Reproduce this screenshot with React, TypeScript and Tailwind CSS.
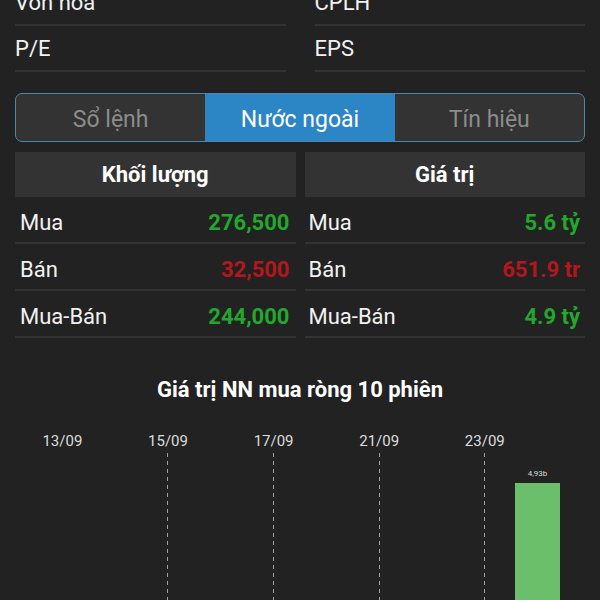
const rows = [
  { label: "Mua", vol: "276,500", val: "5.6 tỷ", up: true, valUp: true },
  { label: "Bán", vol: "32,500", val: "651.9 tr", up: false, valUp: false },
  { label: "Mua-Bán", vol: "244,000", val: "4.9 tỷ", up: true, valUp: true },
];

const sessions = [
  { date: "13/09", line: false },
  { date: "", line: false },
  { date: "15/09", line: true },
  { date: "", line: false },
  { date: "17/09", line: true },
  { date: "", line: false },
  { date: "21/09", line: true },
  { date: "", line: false },
  { date: "23/09", line: true },
  { date: "", line: false, bar: "4,93b" },
];

function Dashed() {
  return (
    <div className="w-px h-full bg-[repeating-linear-gradient(to_bottom,#a0a0a0_0_4px,transparent_4px_8px)]" />
  );
}

export default function App() {
  return (
    <div className="min-h-screen bg-[#222222] text-white overflow-hidden font-['Roboto','Noto_Sans',sans-serif]">
      {/* Stock info rows */}
      <div className="px-[15px] -mt-[20px] grid grid-cols-2 gap-x-[29px]">
        {["Vốn hóa", "CPLH", "P/E", "EPS"].map((t) => (
          <div
            key={t}
            className="h-[46px] flex items-center pt-[1px] border-b-2 border-[#333333] text-[22px] text-[#f2f2f2]"
          >
            {t}
          </div>
        ))}
      </div>

      {/* Tabs */}
      <div className="mx-[15px] mt-[21px] h-[49px] border-[1.5px] border-[#4d87ad] rounded-[7px] overflow-hidden grid grid-cols-3 bg-[#333333] text-[23px]">
        <div className="flex items-center justify-center pt-[5px] text-[#8c8c8c]">Sổ lệnh</div>
        <div className="flex items-center justify-center pt-[5px] bg-[#2c85c4] text-white">Nước ngoài</div>
        <div className="flex items-center justify-center pt-[5px] text-[#8c8c8c]">Tín hiệu</div>
      </div>

      {/* Foreign trading table */}
      <div className="mx-[15px] mt-[10px] grid grid-cols-2 gap-[9px]">
        <div>
          <div className="h-[45px] bg-[#333333] flex items-center justify-center font-bold text-[22px]">
            Khối lượng
          </div>
          {rows.map((r) => (
            <div
              key={r.label}
              className="h-[47px] pt-[6px] border-b-2 border-[#333333] flex items-center justify-between pl-[5px] pr-[6px] text-[22px]"
            >
              <span className="text-[#f2f2f2]">{r.label}</span>
              <span className={`font-bold ${r.up ? "text-[#22a82c]" : "text-[#b5161d]"}`}>
                {r.vol}
              </span>
            </div>
          ))}
        </div>
        <div>
          <div className="h-[45px] bg-[#333333] flex items-center justify-center font-bold text-[22px]">
            Giá trị
          </div>
          {rows.map((r) => (
            <div
              key={r.label}
              className="h-[47px] pt-[6px] border-b-2 border-[#333333] flex items-center justify-between pl-[4px] pr-[5px] text-[22px]"
            >
              <span className="text-[#f2f2f2]">{r.label}</span>
              <span className={`font-bold ${r.valUp ? "text-[#22a82c]" : "text-[#b5161d]"}`}>
                {r.val}
              </span>
            </div>
          ))}
        </div>
      </div>

      {/* Chart */}
      <div className="mt-[38px] text-center font-bold text-[22px] leading-[28px]">
        Giá trị NN mua ròng 10 phiên
      </div>
      <div className="mt-[27px] px-[36px] grid grid-cols-10">
        {sessions.map((s, i) => (
          <div key={i} className="flex flex-col items-center">
            <div className="h-[20px] text-[15px] leading-[20px] text-[#dddddd] whitespace-nowrap">
              {s.date}
            </div>
            <div className="mt-[2px] h-[170px] w-full flex flex-col items-center">
              {s.line && <Dashed />}
              {s.bar && (
                <>
                  <div className="mt-[16px] text-[8px] leading-[10px] text-[#dddddd]">{s.bar}</div>
                  <div className="mt-[4px] w-[45px] flex-1 bg-[#6cbf6a]" />
                </>
              )}
            </div>
          </div>
        ))}
      </div>
    </div>
  );
}
